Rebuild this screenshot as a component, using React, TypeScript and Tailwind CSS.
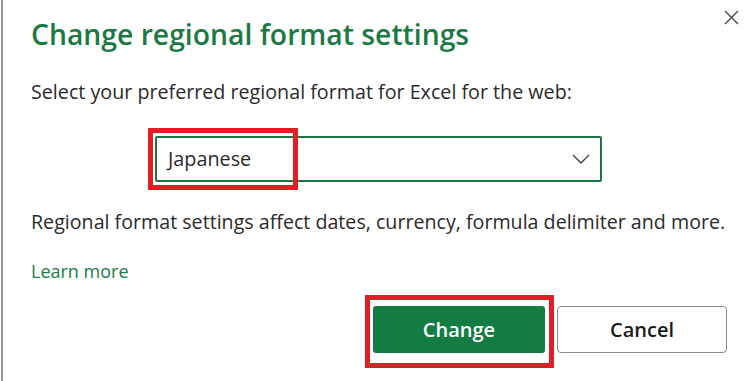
import React from "react";

export default function App() {
  return (
    <div className="relative w-[754px] h-[381px] bg-white overflow-hidden font-['Open_Sans',_'Noto_Sans',_sans-serif]">
      <div className="absolute left-px top-0 h-full w-[2px] bg-[#9a9a9a]" />
      <div className="flex flex-col pl-[31px]">
        <div className="flex items-start justify-between">
          <h1 className="pt-[15px] text-[28.3px] leading-[38px] font-semibold text-[#1a7a43]">
            Change regional format settings
          </h1>
          <button className="mt-[10px] mr-[15px] w-[15px] h-[15px] text-[#444]">
            <svg width="15" height="15" viewBox="0 0 15 15" fill="none">
              <path d="M1 1 L14 14 M14 1 L1 14" stroke="currentColor" strokeWidth="1.3" />
            </svg>
          </button>
        </div>
        <p className="mt-[26px] text-[19.7px] leading-[26px] text-[#2b2b2b]">
          Select your preferred regional format for Excel for the web:
        </p>
        <div className="mt-[31px] ml-[124px] relative w-[447px] h-[46px] border-2 border-[#1f7244] rounded-[2px] flex items-center justify-between pl-[11px] pr-[10px]">
          <span className="text-[19.8px] leading-[42px] text-[#2b2b2b]">Japanese</span>
          <svg width="18" height="10" viewBox="0 0 18 10" fill="none" className="text-[#444]">
            <path d="M1 1 L9 9 L17 1" stroke="currentColor" strokeWidth="1.4" />
          </svg>
          <div className="absolute left-[-9px] top-[-10px] w-[150px] h-[62px] border-[5px] border-[#e21d26] pointer-events-none" />
        </div>
        <p className="mt-[27px] text-[19.65px] leading-[26px] text-[#2b2b2b]">
          Regional format settings affect dates, currency, formula delimiter and more.
        </p>
        <a className="mt-[24px] w-fit text-[18px] leading-[24px] text-[#237a48]">Learn more</a>
        <div className="mt-[23px] flex justify-end gap-[12px] pr-[27px]">
          <div className="relative">
            <button className="w-[172px] h-[47px] rounded-[3px] bg-[#127c42] text-white text-[20px] font-semibold leading-[47px]">
              Change
            </button>
            <div className="absolute left-[-8px] top-[-11px] w-[189px] h-[73px] border-[5px] border-[#e21d26] pointer-events-none" />
          </div>
          <button className="w-[170px] h-[47px] rounded-[4px] border border-[#8a8a8a] bg-white text-[#1a1a1a] text-[20px] font-semibold leading-[45px]">
            Cancel
          </button>
        </div>
      </div>
    </div>
  );
}
